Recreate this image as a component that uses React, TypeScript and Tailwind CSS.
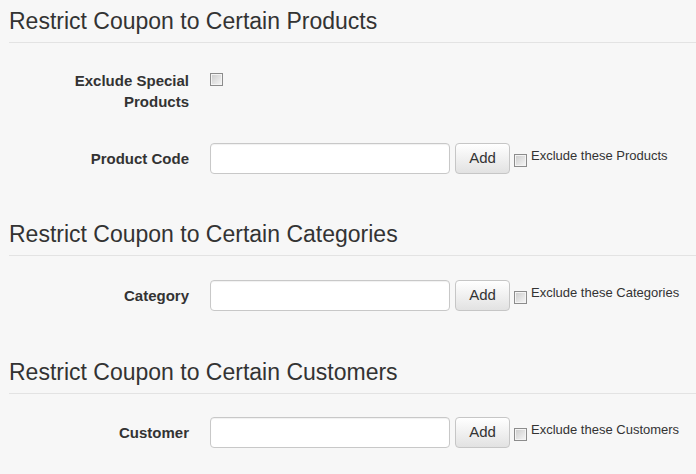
import React from 'react'

const font = { fontFamily: '"Liberation Sans", Arial, sans-serif' }

function Checkbox({ className = '' }: { className?: string }) {
  return (
    <div className={`w-[13px] h-[13px] shrink-0 border border-[#8c8c8c] bg-[#f4f4f4] p-[1px] ${className}`}>
      <div className="w-full h-full bg-gradient-to-br from-[#cfcfcf] to-[#f3f3f3]" />
    </div>
  )
}

function SectionTitle({ title, first }: { title: string; first?: boolean }) {
  return (
    <h2
      className={`${first ? 'pt-[8px]' : ''} pb-2 border-b border-[#e3e3e3] text-[23px] leading-[26px] text-[#333]`}
    >
      {title}
    </h2>
  )
}

function AddRow({ label, exclude, className = '' }: { label: string; exclude: string; className?: string }) {
  return (
    <div className={`flex ${className}`}>
      <div className="w-[180px] flex items-center justify-end text-right font-bold text-[15px] leading-[21px] text-[#333]">
        {label}
      </div>
      <input
        type="text"
        className="ml-[21px] w-[240px] h-[31px] bg-white border border-[#c8c8c8] rounded-[4px] outline-none shadow-[inset_0_1px_1px_rgba(0,0,0,0.06)] px-2 text-[14px]"
      />
      <button className="ml-[5px] w-[55px] h-[31px] rounded-[4px] border border-[#c6c6c6] bg-gradient-to-b from-white to-[#e2e2e2] text-[15px] text-[#333]">
        Add
      </button>
      <Checkbox className="ml-[4px] mt-[11px]" />
      <span className="ml-[4px] mt-[4px] text-[13px] leading-[18px] text-[#333] self-start">{exclude}</span>
    </div>
  )
}

export default function App() {
  return (
    <div className="min-h-screen bg-[#f7f7f7] pl-[9px]" style={font}>
      {/* Products */}
      <SectionTitle title="Restrict Coupon to Certain Products" first />
      <div className="flex mt-[27px]">
        <div className="w-[180px] pl-[50px] text-right font-bold text-[15px] leading-[21px] text-[#333]">
          Exclude Special Products
        </div>
        <Checkbox className="ml-[21px] mt-[3px]" />
      </div>
      <AddRow label="Product Code" exclude="Exclude these Products" className="mt-[31px]" />

      {/* Categories */}
      <div className="mt-[47px]">
        <SectionTitle title="Restrict Coupon to Certain Categories" />
      </div>
      <AddRow label="Category" exclude="Exclude these Categories" className="mt-[24px]" />

      {/* Customers */}
      <div className="mt-[48px]">
        <SectionTitle title="Restrict Coupon to Certain Customers" />
      </div>
      <AddRow label="Customer" exclude="Exclude these Customers" className="mt-[23px]" />
    </div>
  )
}
